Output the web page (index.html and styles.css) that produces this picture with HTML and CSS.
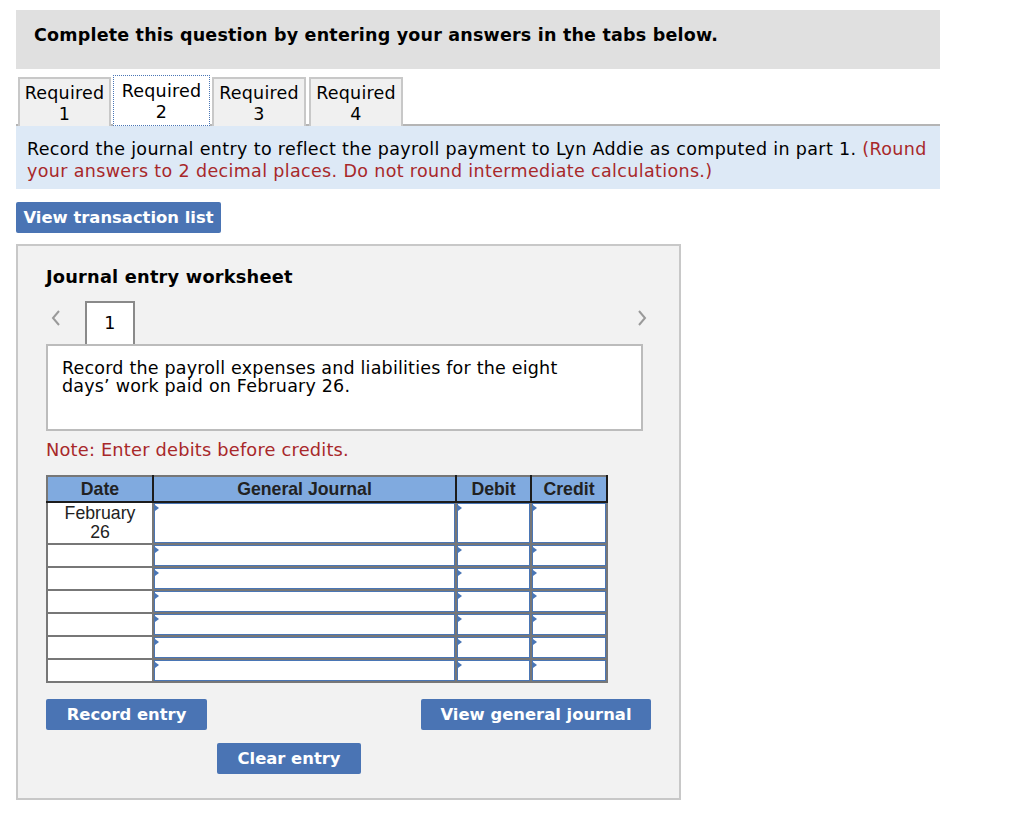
FILE: index.html
```html
<!DOCTYPE html>
<html>
<head>
<meta charset="utf-8">
<link rel="stylesheet" href="styles.css">
</head>
<body>
<div class="page">
  <div class="header">Complete this question by entering your answers in the tabs below.</div>

  <div class="tabs">
    <div class="tab t1">Required<br>1</div>
    <div class="tab t2 active">Required<br>2</div>
    <div class="tab t3">Required<br>3</div>
    <div class="tab t4">Required<br>4</div>
  </div>

  <div class="instructions">
    Record the journal entry to reflect the payroll payment to Lyn Addie as computed in part 1. <span class="red">(Round your answers to 2 decimal places. Do not round intermediate calculations.)</span>
  </div>

  <button class="btn btn-list">View transaction list</button>

  <div class="panel">
    <div class="panel-title">Journal entry worksheet</div>

    <div class="nav">
      <svg class="chev" width="10" height="16" viewBox="0 0 10 16"><polyline points="8,1 2,8 8,15" fill="none" stroke="#9a9a9a" stroke-width="2"/></svg>
      <div class="step">1</div>
      <div class="nav-spacer"></div>
      <svg class="chev" width="10" height="16" viewBox="0 0 10 16"><polyline points="2,1 8,8 2,15" fill="none" stroke="#9a9a9a" stroke-width="2"/></svg>
    </div>

    <div class="desc">Record the payroll expenses and liabilities for the eight<br>days’ work paid on February 26.</div>

    <div class="note">Note: Enter debits before credits.</div>

    <table class="journal">
      <colgroup>
        <col class="c-date"><col class="c-gj"><col class="c-dr"><col class="c-cr">
      </colgroup>
      <thead>
        <tr><th>Date</th><th>General Journal</th><th>Debit</th><th>Credit</th></tr>
      </thead>
      <tbody>
        <tr class="first"><td class="date">February<br>26</td><td><div class="inp"></div></td><td><div class="inp"></div></td><td><div class="inp"></div></td></tr>
        <tr><td class="date"></td><td><div class="inp"></div></td><td><div class="inp"></div></td><td><div class="inp"></div></td></tr>
        <tr><td class="date"></td><td><div class="inp"></div></td><td><div class="inp"></div></td><td><div class="inp"></div></td></tr>
        <tr><td class="date"></td><td><div class="inp"></div></td><td><div class="inp"></div></td><td><div class="inp"></div></td></tr>
        <tr><td class="date"></td><td><div class="inp"></div></td><td><div class="inp"></div></td><td><div class="inp"></div></td></tr>
        <tr><td class="date"></td><td><div class="inp"></div></td><td><div class="inp"></div></td><td><div class="inp"></div></td></tr>
        <tr><td class="date"></td><td><div class="inp"></div></td><td><div class="inp"></div></td><td><div class="inp"></div></td></tr>
      </tbody>
    </table>

    <div class="actions">
      <button class="btn btn-record">Record entry</button>
      <button class="btn btn-view">View general journal</button>
    </div>
    <div class="actions2">
      <button class="btn btn-clear">Clear entry</button>
    </div>
  </div>
</div>
</body>
</html>
```

FILE: styles.css
```css
* { box-sizing: border-box; }
body {
  margin: 0;
  font-family: "DejaVu Sans", Verdana, sans-serif;
  font-size: 17.5px;
  letter-spacing: 0.2px;
  color: #000;
  background: #fff;
}
.page {
  padding: 10px 0 0 16px;
  width: 940px;
}
.header {
  background: #e0e0e0;
  height: 59px;
  padding: 15px 18px 0;
  font-weight: bold;
  line-height: 20px;
}
.tabs {
  display: flex;
  align-items: flex-end;
  gap: 2px;
  padding-left: 2px;
  margin-top: 6px;
  position: relative;
  z-index: 1;
  margin-bottom: -2px;
}
.tab {
  height: 49px;
  padding: 4px 0 0;
  border: 2px solid #c8c8c8;
  border-bottom: none;
  background: #f0f0f0;
  text-align: center;
  line-height: 21px;
  white-space: nowrap;
}
.t1 { width: 93px; }
.t2 { width: 97px; }
.t3 { width: 94px; }
.t4 { width: 94px; margin-left: 1px; }
.tab.active {
  height: 51px;
  background: #fff;
  border: 1px dotted #4a76b5;
  padding-top: 5px;
}
.instructions {
  border-top: 2px solid #b5b5b5;
  background: #dde9f6;
  padding: 12px 6px 7px 11px;
  line-height: 22px;
  letter-spacing: 0.35px;
}
.red { color: #a8282a; }

.btn {
  display: inline-block;
  background: #4a74b4;
  color: #fff;
  border: none;
  border-radius: 2px;
  font-family: "DejaVu Sans", Verdana, sans-serif;
  font-weight: bold;
  font-size: 16.4px;
  letter-spacing: 0;
  height: 31px;
  padding: 0 6px;
  cursor: pointer;
}
.btn-list {
  margin-top: 13px;
  width: 205px;
  display: block;
}
.panel {
  margin-top: 11px;
  width: 665px;
  height: 556px;
  background: #f2f2f2;
  border: 2px solid #c8c8c8;
  padding: 20px 28px 0;
}
.panel-title {
  font-weight: bold;
  font-size: 17.8px;
  line-height: 22px;
}
.nav {
  display: flex;
  align-items: flex-start;
  width: 601px;
  margin-top: 13px;
  height: 43px;
}
.nav .chev {
  margin-top: 9px;
  margin-left: 5px;
}
.nav .chev:last-child { margin-left: 0; margin-right: 0; }
.step {
  margin-left: 24px;
  width: 50px;
  height: 43px;
  background: #fff;
  border: 2px solid #8a8a8a;
  border-bottom: none;
  text-align: center;
  line-height: 20px;
  padding-top: 10px;
  position: relative;
  z-index: 1;
}
.nav-spacer { flex: 1; }
.desc {
  width: 597px;
  height: 87px;
  background: #fff;
  border: 2px solid #bcbcbc;
  padding: 13px 14px 0;
  line-height: 18px;
}
.note {
  color: #a8282a;
  font-size: 17.8px;
  line-height: 20px;
  margin-top: 9px;
}
.journal {
  margin-top: 15px;
  border-collapse: collapse;
  table-layout: fixed;
  width: 560px;
  font-family: "Liberation Sans", Arial, sans-serif;
  font-size: 17.7px;
  letter-spacing: 0;
  color: #222;
}
.c-date { width: 106px; }
.c-gj { width: 303px; }
.c-dr { width: 75px; }
.c-cr { width: 76px; }
.journal th, .journal td {
  border: 2px solid #777;
  padding: 0;
}
.journal th {
  background: #80aadf;
  font-weight: bold;
  height: 26px;
  line-height: 19px;
  border-bottom: 2px solid #1c1c1c;
  border-right: 2px solid #1c1c1c;
}
.journal th:first-child { border-left-color: #777; }
.journal td {
  background: #fff;
  vertical-align: top;
}
.journal td.date {
  text-align: center;
  line-height: 19px;
  padding-top: 1px;
}
.inp {
  position: relative;
  height: 21px;
  border: 1px solid #4a76b5;
  background: #fff;
}
.first .inp { height: 40px; }
.inp::before {
  content: "";
  position: absolute;
  left: 0;
  top: 1px;
  border-left: 4px solid #4a76b5;
  border-top: 3px solid transparent;
  border-bottom: 3px solid transparent;
}
.actions {
  display: flex;
  justify-content: space-between;
  width: 605px;
  margin-top: 16px;
}
.btn-record { width: 161px; }
.btn-view { width: 230px; }
.actions2 {
  margin-top: 13px;
  padding-left: 171px;
}
.btn-clear { width: 144px; }
```
